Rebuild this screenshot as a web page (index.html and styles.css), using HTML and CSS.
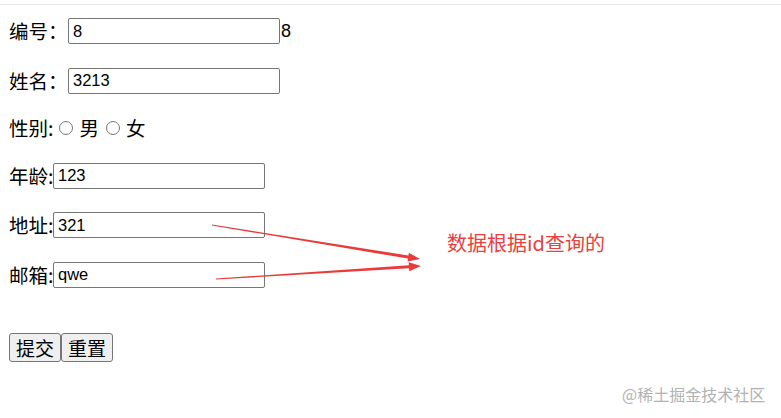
FILE: index.html
```html
<!DOCTYPE html>
<html lang="zh-CN">
<head>
<meta charset="utf-8">
<title>表单</title>
<link rel="stylesheet" href="styles.css">
</head>
<body>
<div class="topline"></div>
<form class="form">
  <div class="row">
    <label class="label">编号：</label>
    <input class="field field-wide" type="text" value="8">
    <span class="echo">8</span>
  </div>
  <div class="row">
    <label class="label">姓名：</label>
    <input class="field field-wide" type="text" value="3213">
  </div>
  <div class="row row-radio">
    <label class="label">性别:</label>
    <span class="radio radio-first"></span><span class="opt">男</span>
    <span class="radio"></span><span class="opt">女</span>
  </div>
  <div class="row">
    <label class="label">年龄:</label>
    <input class="field" type="text" value="123">
  </div>
  <div class="row">
    <label class="label">地址:</label>
    <input class="field" type="text" value="321">
  </div>
  <div class="row">
    <label class="label">邮箱:</label>
    <input class="field" type="text" value="qwe">
  </div>
  <div class="buttons">
    <button class="btn" type="button">提交</button><button class="btn" type="button">重置</button>
  </div>
</form>

<svg class="arrows" width="781" height="418" viewBox="0 0 781 418">
  <polygon fill="#ea3a3a" points="212.1,224.5 408.4,255.6 408.9,252.7 420,259 407.5,261.5 408,258.6 211.9,225.5"/>
  <polygon fill="#ea3a3a" points="216,278.5 408.9,265.3 408.7,262.3 421,266 409.3,271.3 409.1,268.3 216,279.5"/>
</svg>
<div class="note">数据根据id查询的</div>
<div class="watermark">@稀土掘金技术社区</div>
</body>
</html>
```
FILE: styles.css
```css
html, body {
  margin: 0;
  padding: 0;
  background: #ffffff;
}
body {
  position: relative;
  width: 781px;
  height: 418px;
  overflow: hidden;
  font-family: "Noto Sans CJK SC", "Microsoft YaHei", sans-serif;
  color: #000;
}
.topline {
  margin-top: 4px;
  height: 1px;
  background: #e3e3e3;
}
.form {
  display: flex;
  flex-direction: column;
  gap: 23.5px;
  padding: 13px 0 0 9px;
}
.row {
  display: flex;
  align-items: center;
  height: 26px;
}
.row-radio {
  height: 22px;
}
.label {
  font-size: 19.5px;
  line-height: 26px;
  white-space: nowrap;
}
.field {
  box-sizing: border-box;
  width: 212px;
  height: 26px;
  margin: 0;
  padding: 0 4px;
  border: 1px solid #767676;
  border-radius: 2px;
  font-family: "Liberation Sans", Arial, sans-serif;
  font-size: 16.5px;
  color: #000;
  background: #fff;
  outline: none;
}
.row:nth-child(1) .label,
.row:nth-child(2) .label {
  width: 59px;
}
.row:nth-child(4) .label,
.row:nth-child(5) .label,
.row:nth-child(6) .label {
  width: 44px;
}
.echo {
  font-family: "Liberation Sans", Arial, sans-serif;
  font-size: 18px;
  margin-left: 1px;
  line-height: 26px;
}
.radio {
  box-sizing: border-box;
  width: 14px;
  height: 14px;
  border: 1.3px solid #767676;
  border-radius: 50%;
  margin: 0 6px 0 7px;
  flex: none;
}
.radio-first {
  margin-left: 6px;
}
.opt {
  font-size: 19.5px;
  line-height: 22px;
}
.buttons {
  display: flex;
  margin-top: 22px;
}
.btn {
  box-sizing: border-box;
  height: 29px;
  padding: 0 6px;
  margin: 0;
  border: 1px solid #767676;
  border-radius: 3px;
  background: #efefef;
  font-family: "Noto Sans CJK SC", "Microsoft YaHei", sans-serif;
  font-size: 19px;
  line-height: 27px;
  color: #000;
}
.arrows {
  position: absolute;
  left: 0;
  top: 0;
  pointer-events: none;
}
.note {
  position: absolute;
  left: 447px;
  top: 230px;
  font-size: 20px;
  line-height: 26px;
  color: #eb4040;
  white-space: nowrap;
}
.watermark {
  position: absolute;
  left: 622px;
  top: 383px;
  font-size: 16px;
  line-height: 22px;
  color: #b2b2b2;
  white-space: nowrap;
}
```
